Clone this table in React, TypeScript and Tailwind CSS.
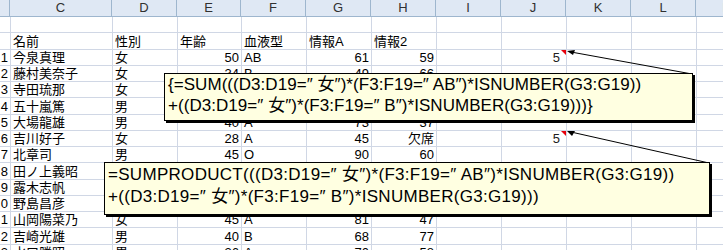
import React from 'react';

const cols = [
  { key: 'B', w: 11 },
  { key: 'C', w: 102 },
  { key: 'D', w: 65 },
  { key: 'E', w: 64 },
  { key: 'F', w: 65 },
  { key: 'G', w: 65 },
  { key: 'H', w: 65 },
  { key: 'I', w: 65 },
  { key: 'J', w: 65 },
  { key: 'K', w: 65 },
  { key: 'L', w: 65 },
  { key: 'M', w: 65 },
];

// [No, 名前, 性別, 年齢, 血液型, 情報A, 情報2, J]
const rows: (string | number)[][] = [
  ['', '', '', '', '', '', '', ''],
  ['', '名前', '性別', '年齢', '血液型', '情報A', '情報2', ''],
  [1, '今泉真理', '女', 50, 'AB', 61, 59, 5],
  [2, '藤村美奈子', '女', 34, 'B', 49, 66, ''],
  [3, '寺田琉那', '女', 22, 'O', 55, 70, ''],
  [4, '五十嵐篤', '男', 38, 'A', 62, 48, ''],
  [5, '大場龍雄', '男', 40, 'A', 73, 37, ''],
  [6, '吉川好子', '女', 28, 'A', 45, '欠席', 5],
  [7, '北章司', '男', 45, 'O', 90, 60, ''],
  [8, '田ノ上義昭', '男', 52, 'B', 66, 72, ''],
  [9, '露木志帆', '女', 31, 'AB', 58, 64, ''],
  [0, '野島昌彦', '男', 47, 'O', 77, 51, ''],
  [1, '山岡陽菜乃', '女', 45, 'A', 81, 47, ''],
  [2, '吉崎光雄', '男', 40, 'B', 68, 77, ''],
  [3, '水口勝昭', '男', 36, 'A', 70, 58, ''],
];

const font = { fontFamily: '"Liberation Sans", "Noto Sans CJK JP", sans-serif' };

const Cell: React.FC<{ w: number; align?: 'left' | 'right'; children?: React.ReactNode; flag?: boolean }> = ({
  w,
  align = 'left',
  children,
  flag,
}) => (
  <div
    className={`relative shrink-0 h-full border-r border-b border-[#d0d7e5] flex items-end overflow-hidden whitespace-nowrap text-[13px] leading-[15px] text-black ${
      align === 'right' ? 'justify-end pr-[2px]' : 'justify-start pl-[2px]'
    }`}
    style={{ width: w }}
  >
    {children}
    {flag && (
      <span className="absolute top-0 right-0 w-0 h-0 border-t-[5px] border-l-[5px] border-t-red-600 border-l-transparent" />
    )}
  </div>
);

export default function App() {
  return (
    <div className="relative w-[723px] h-[250px] overflow-hidden bg-white" style={font}>
      {/* column headers */}
      <div className="flex h-[17px] bg-[#dfe8f4] border-b border-[#9eb6ce]">
        {cols.map((c, i) => (
          <div
            key={c.key}
            className="shrink-0 border-r border-[#9eb6ce] flex items-center justify-center text-[13px] text-[#303030]"
            style={{ width: c.w, marginLeft: i === 0 ? -1 : 0 }}
          >
            {i === 0 ? '' : c.key}
          </div>
        ))}
      </div>

      {/* body */}
      {rows.map((r, ri) => (
        <div key={ri} className="flex h-[16.25px]">
          <Cell w={11} align="right">{r[0]}</Cell>
          <Cell w={102}>{r[1]}</Cell>
          <Cell w={65}>{r[2]}</Cell>
          <Cell w={64} align={ri === 1 ? 'left' : 'right'}>{r[3]}</Cell>
          <Cell w={65}>{r[4]}</Cell>
          <Cell w={65} align={ri === 1 ? 'left' : 'right'}>{r[5]}</Cell>
          <Cell w={65} align={ri === 1 ? 'left' : 'right'}>{r[6]}</Cell>
          <Cell w={65} />
          <Cell w={65} align="right" flag={r[7] !== ''}>
            <span className="pr-[4px] text-[#202020]">{r[7]}</span>
          </Cell>
          <Cell w={65} />
          <Cell w={65} />
          <Cell w={65} />
        </div>
      ))}

      {/* comment arrows */}
      <svg className="absolute inset-0 pointer-events-none" width={723} height={250}>
        <line x1={692} y1={74} x2={571} y2={52} stroke="black" strokeWidth={1} />
        <polygon points="567,51 575,50 573,55" fill="black" />
        <line x1={709} y1={163} x2={571} y2={132} stroke="black" strokeWidth={1} />
        <polygon points="567,131 575,131 572,136" fill="black" />
      </svg>

      {/* comment 1 */}
      <div
        className="absolute left-[164px] top-[73px] w-[529px] h-[48px] bg-[#ffffe1] border border-black shadow-[2px_2px_0_0_#000] pl-[3px] pt-[0px] text-[17px] tracking-[0.05px] leading-[21px] text-black whitespace-nowrap"
        style={font}
      >
        <div>{'{=SUM(((D3:D19=″ 女″)*(F3:F19=″ AB″)*ISNUMBER(G3:G19))'}</div>
        <div>{'+((D3:D19=″ 女″)*(F3:F19=″ B″)*ISNUMBER(G3:G19)))}'}</div>
      </div>

      {/* comment 2 */}
      <div
        className="absolute left-[104px] top-[162px] w-[606px] h-[53px] bg-[#ffffe1] border border-black shadow-[2px_2px_0_0_#000] pl-[3px] pt-[1px] text-[17px] tracking-[0.3px] leading-[22px] text-black whitespace-nowrap"
        style={font}
      >
        <div>{'=SUMPRODUCT(((D3:D19=″ 女″)*(F3:F19=″ AB″)*ISNUMBER(G3:G19))'}</div>
        <div>{'+((D3:D19=″ 女″)*(F3:F19=″ B″)*ISNUMBER(G3:G19)))'}</div>
      </div>
    </div>
  );
}
